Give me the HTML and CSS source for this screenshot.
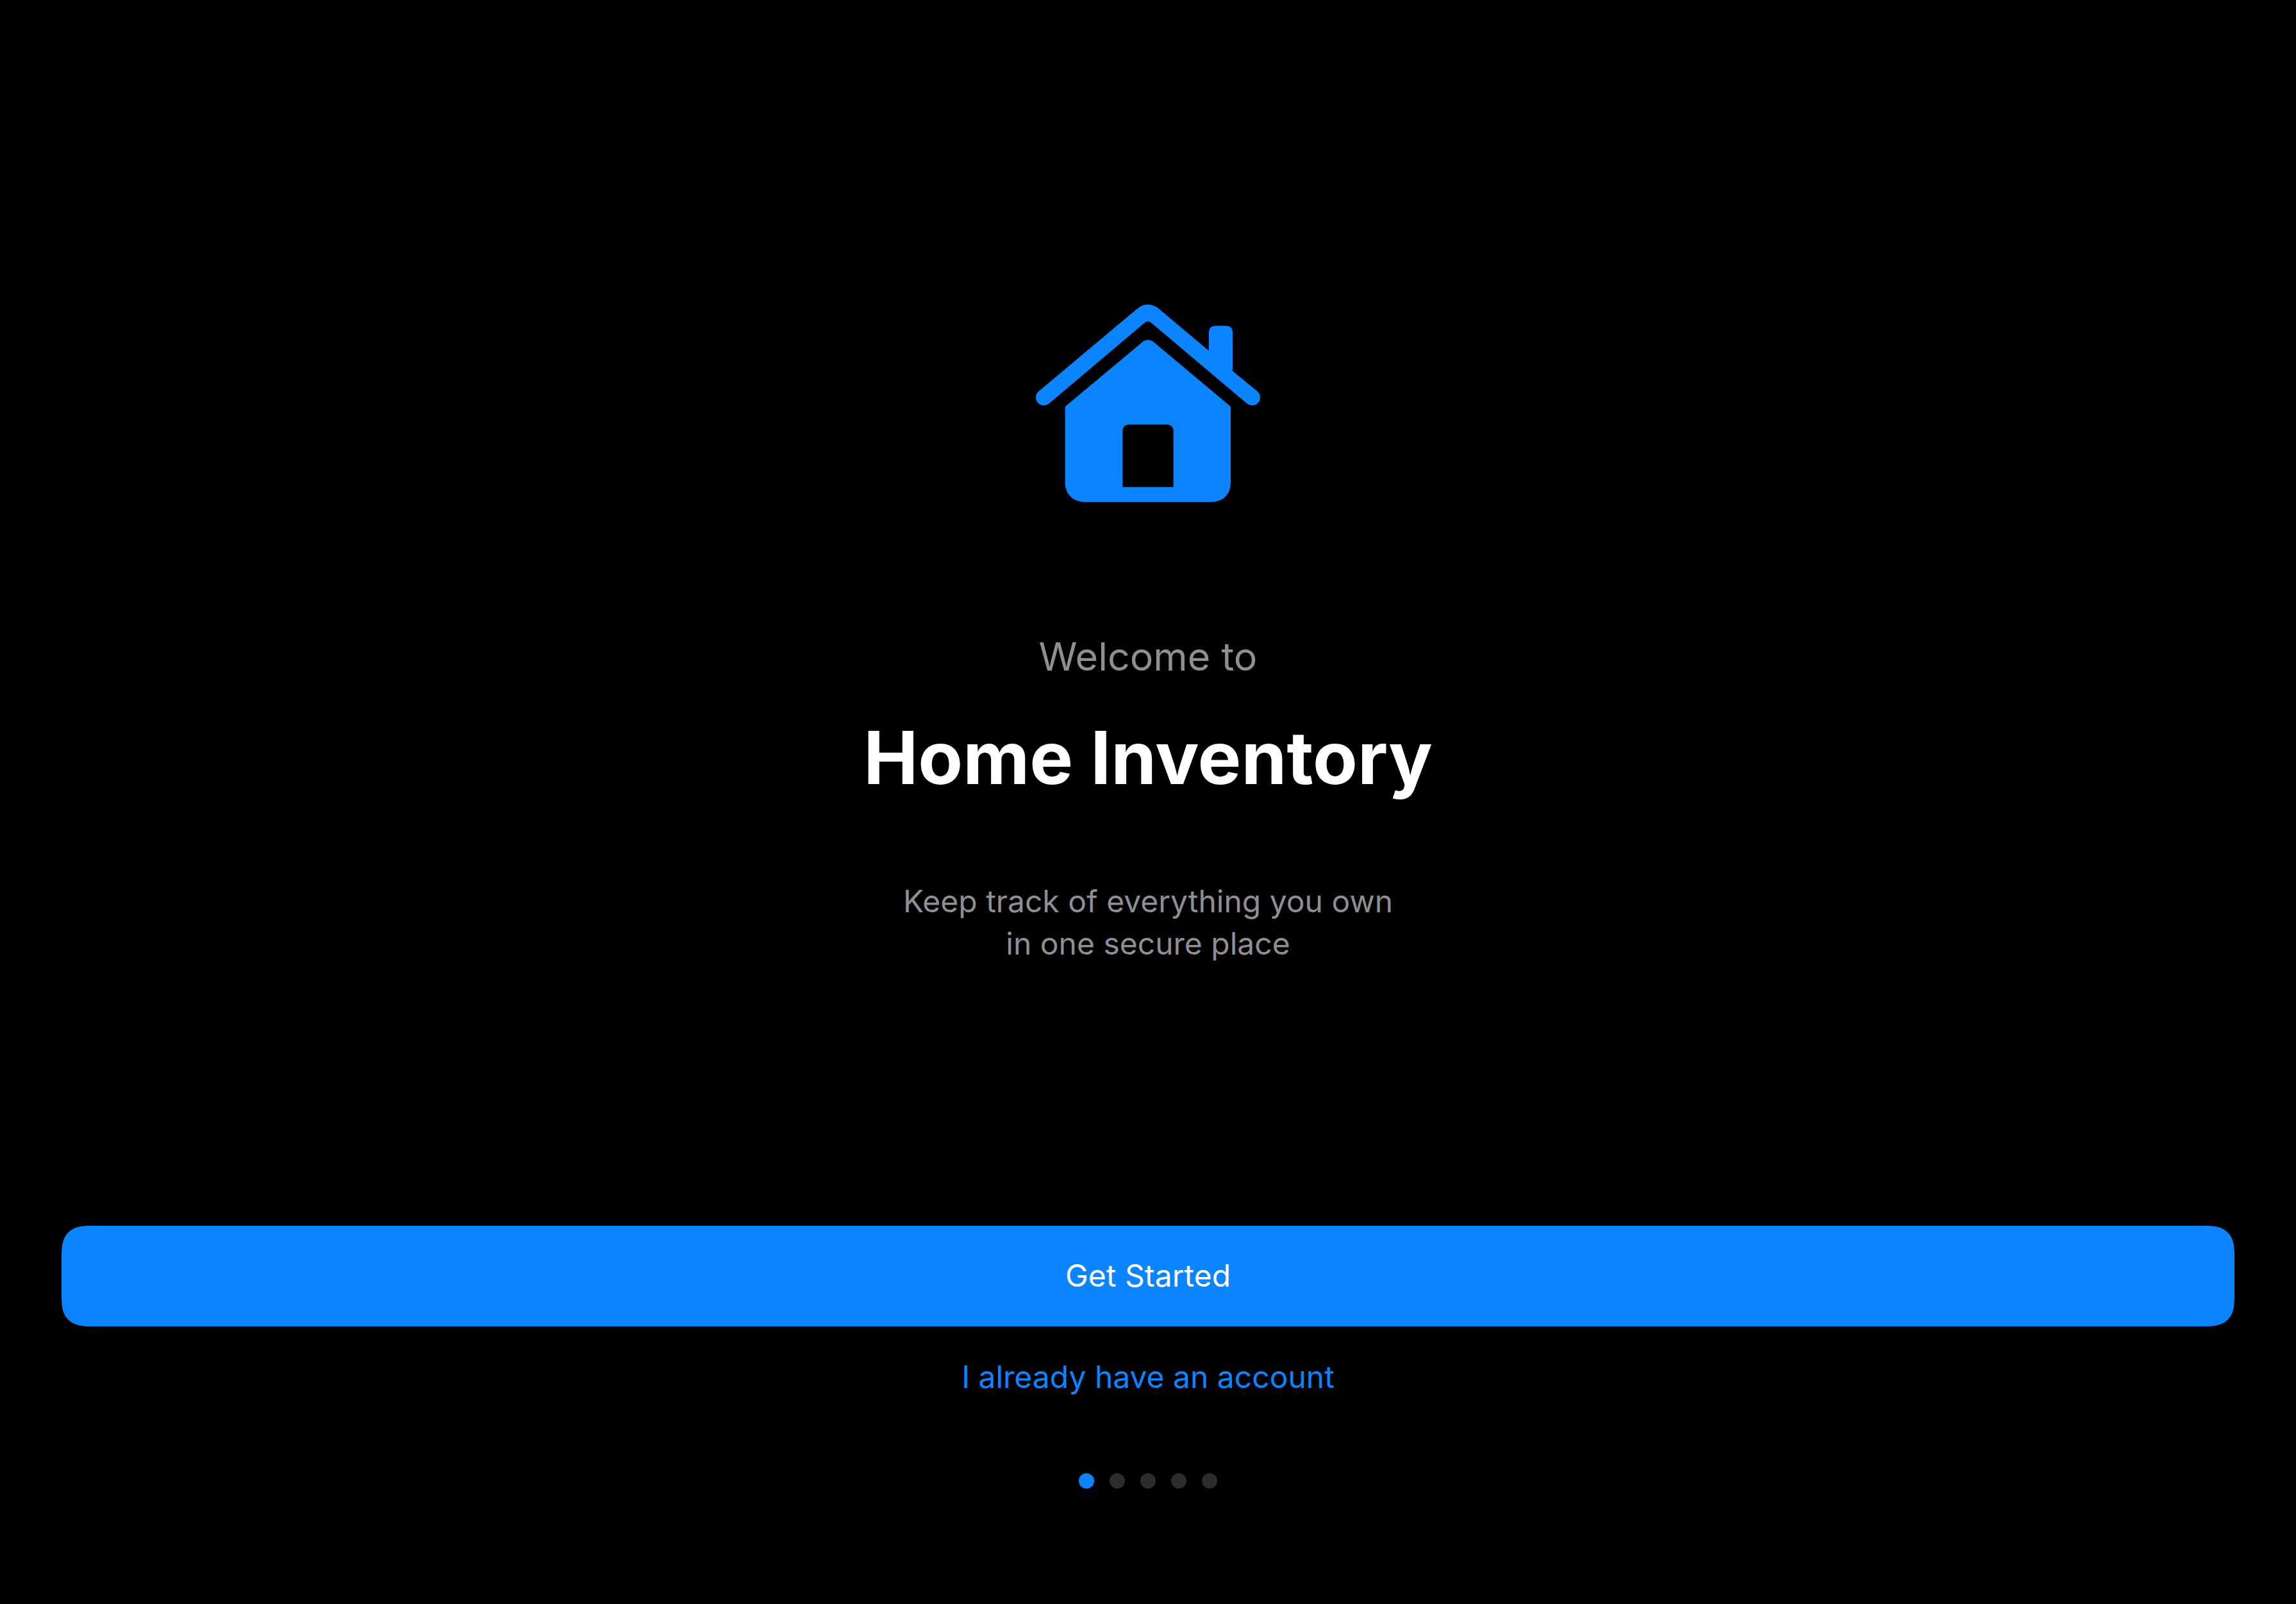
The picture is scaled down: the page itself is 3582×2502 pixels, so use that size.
FILE: index.html
```html
<!DOCTYPE html>
<html lang="en">
<head>
<meta charset="utf-8">
<meta name="viewport" content="width=device-width, initial-scale=1">
<title>Home Inventory</title>
<link rel="stylesheet" href="styles.css">
</head>
<body>
<main class="onboarding">
  <section class="hero">
    <svg class="hero-icon" viewBox="48 74 1050 924" aria-hidden="true">
      <path d="M522 94 Q546 74 572 74 Q600 74 624 94 L858 291 V206 Q858 174 890 174 H938 Q969 174 969 206 V385 L1084 480 Q1098 492 1098 509 A37 37 0 0 1 1061 546 Q1046 546 1030 532 L590 161 Q582 153 572 153 Q563 153 555 161 L116 532 Q100 546 85 546 A37 37 0 0 1 48 509 Q48 492 62 480 Z"/>
      <path fill-rule="evenodd" d="M545 251 Q558 240 572 240 Q587 240 601 251 L960 552 V906 C960 962 925 998 868 998 H280 C221 998 185 962 185 906 V552 Z M454 928 H692 V668 Q692 636 660 636 H486 Q454 636 454 668 Z"/>
    </svg>
    <p class="welcome">Welcome to</p>
    <h1 class="title">Home Inventory</h1>
    <p class="tagline">Keep track of everything you own<br>in one secure place</p>
  </section>
  <div class="actions">
    <button class="primary" type="button">Get Started</button>
    <a class="secondary" href="#sign-in">I already have an account</a>
  </div>
  <ol class="pages" aria-label="Page 1 of 5">
    <li class="dot dot-current"></li>
    <li class="dot"></li>
    <li class="dot"></li>
    <li class="dot"></li>
    <li class="dot"></li>
  </ol>
</main>
</body>
</html>
```
FILE: styles.css
```css
:root {
  --accent: #0a84ff;
  --muted: #8e8e93;
}

* {
  box-sizing: border-box;
}

body {
  margin: 0;
  background: #000;
  color: #fff;
  font-family: Inter, "Liberation Sans", sans-serif;
  font-size: 48px;
  line-height: 66px;
}

.onboarding {
  display: flex;
  flex-direction: column;
  min-height: 100vh;
  padding: 68px 96px 180px;
}

.hero {
  flex: 1;
  display: flex;
  flex-direction: column;
  align-items: center;
  justify-content: center;
  text-align: center;
}

.hero-icon {
  width: 350px;
  height: 308px;
  margin-bottom: 202px;
  fill: var(--accent);
}

.welcome {
  margin: 0 0 47px;
  color: var(--muted);
  font-size: 61px;
  line-height: 78px;
}

.title {
  margin: 0 0 119px;
  font-size: 114px;
  font-weight: 700;
  line-height: 144px;
}

.tagline {
  margin: 0;
  color: var(--muted);
}

.actions {
  display: flex;
  flex-direction: column;
  align-items: center;
  gap: 46px;
}

.primary {
  width: 100%;
  padding: 45px 48px 46px;
  border: 0;
  border-radius: 48px;
  corner-shape: superellipse(1.5);
  background: var(--accent);
  color: #fff;
  font: inherit;
}

.secondary {
  color: var(--accent);
  text-decoration: none;
}

.pages {
  display: flex;
  justify-content: center;
  gap: 24px;
  margin: 117px 0 0;
  padding: 0;
  list-style: none;
}

.dot {
  width: 24px;
  height: 24px;
  border-radius: 50%;
  background: #2c2c2c;
}

.dot-current {
  background: var(--accent);
}
```
